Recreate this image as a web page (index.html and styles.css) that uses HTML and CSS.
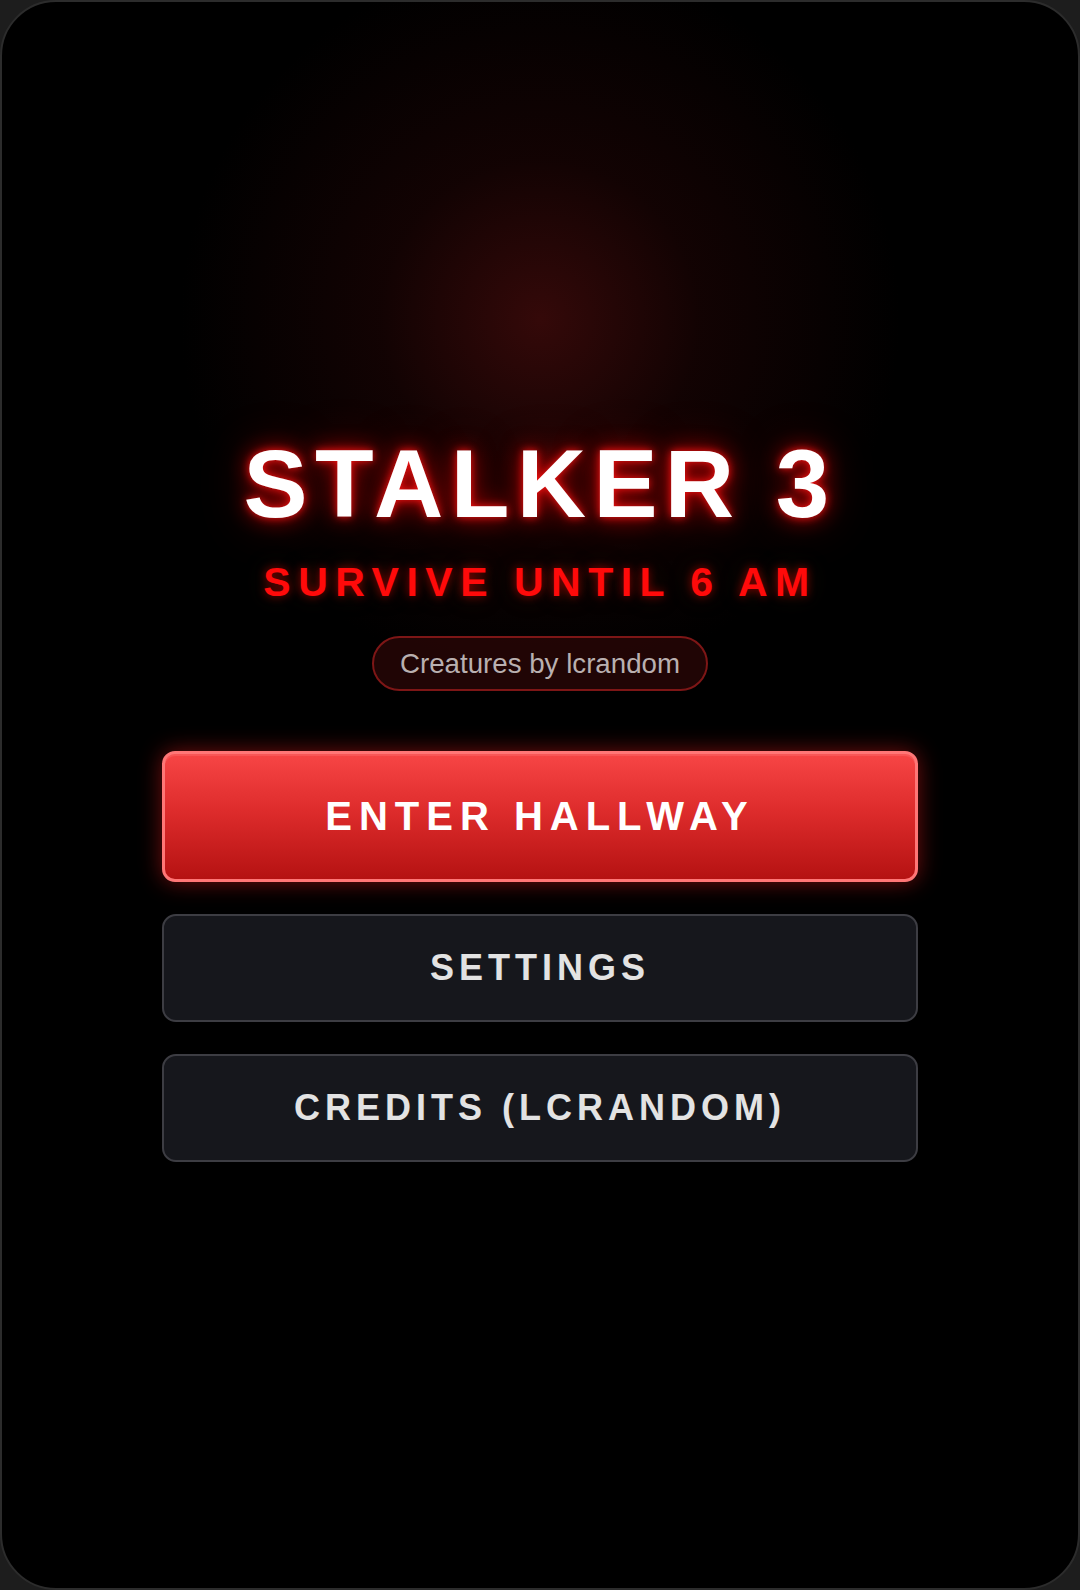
FILE: index.html
```html
<!DOCTYPE html>
<html lang="en">
<head>
    <meta charset="UTF-8">
    <title>Stalker 3</title>
    <link rel="stylesheet" href="styles.css">
</head>
<body>
    <div class="screen">
        <h1 class="title">STALKER 3</h1>
        <div class="subtitle">SURVIVE UNTIL 6 AM</div>
        <div class="credit-pill">Creatures by lcrandom</div>

        <div class="menu">
            <button class="menu-btn menu-btn-primary">ENTER HALLWAY</button>
            <button class="menu-btn">SETTINGS</button>
            <button class="menu-btn">CREDITS (LCRANDOM)</button>
        </div>
    </div>
</body>
</html>
```

FILE: styles.css
```css
:root {
    --red: #ff0a0a;
    --panel: #16171c;
    --panel-border: #3d3d43;
}

* {
    box-sizing: border-box;
}

body {
    margin: 0;
    background: #1d1d1d;
    font-family: 'Liberation Sans', Arial, sans-serif;
}

.screen {
    height: 1590px;
    border: 2px solid #2c2c2c;
    border-radius: 56px;
    padding-top: 8px;
    background:
        radial-gradient(circle at 50% 20%, rgba(70, 12, 12, 0.75) 0, rgba(40, 6, 6, 0.45) 160px, rgba(0, 0, 0, 0) 360px),
        #000;
    display: flex;
    flex-direction: column;
    align-items: center;
    justify-content: center;
    overflow: hidden;
}

.title {
    margin: 0;
    font-size: 96px;
    line-height: 96px;
    font-weight: 700;
    letter-spacing: 7.4px;
    color: #fff;
    text-shadow:
        0 0 8px rgba(255, 20, 20, 0.95),
        0 0 22px rgba(255, 0, 0, 0.65),
        0 0 48px rgba(255, 0, 0, 0.35);
}

.subtitle {
    margin-top: 29px;
    font-size: 41px;
    line-height: 42px;
    font-weight: 700;
    letter-spacing: 7.5px;
    color: var(--red);
    text-shadow:
        0 0 10px rgba(255, 0, 0, 0.55),
        0 0 24px rgba(120, 90, 0, 0.25);
}

.credit-pill {
    margin-top: 33px;
    padding: 10px 26px;
    font-size: 27.7px;
    line-height: 31px;
    color: #b9b0b0;
    background: rgba(70, 10, 10, 0.45);
    border: 2px solid #7d1616;
    border-radius: 30px;
}

.menu {
    margin-top: 60px;
    width: 756px;
    display: flex;
    flex-direction: column;
    gap: 32px;
}

.menu-btn {
    display: block;
    width: 100%;
    padding: 31px 0;
    font-family: inherit;
    font-size: 36px;
    line-height: 42px;
    font-weight: 700;
    letter-spacing: 5px;
    color: #e3e3e3;
    background: var(--panel);
    border: 2px solid var(--panel-border);
    border-radius: 14px;
    cursor: pointer;
}

.menu-btn-primary {
    padding: 39px 0;
    font-size: 40px;
    line-height: 47px;
    letter-spacing: 7px;
    color: #fff;
    background: linear-gradient(180deg, #f74545 0%, #de2c2c 45%, #b51212 100%);
    border: 3px solid #ff7676;
    border-radius: 13px;
    box-shadow:
        0 0 22px rgba(255, 30, 30, 0.45),
        inset 0 2px 0 rgba(255, 140, 140, 0.25);
}
```
